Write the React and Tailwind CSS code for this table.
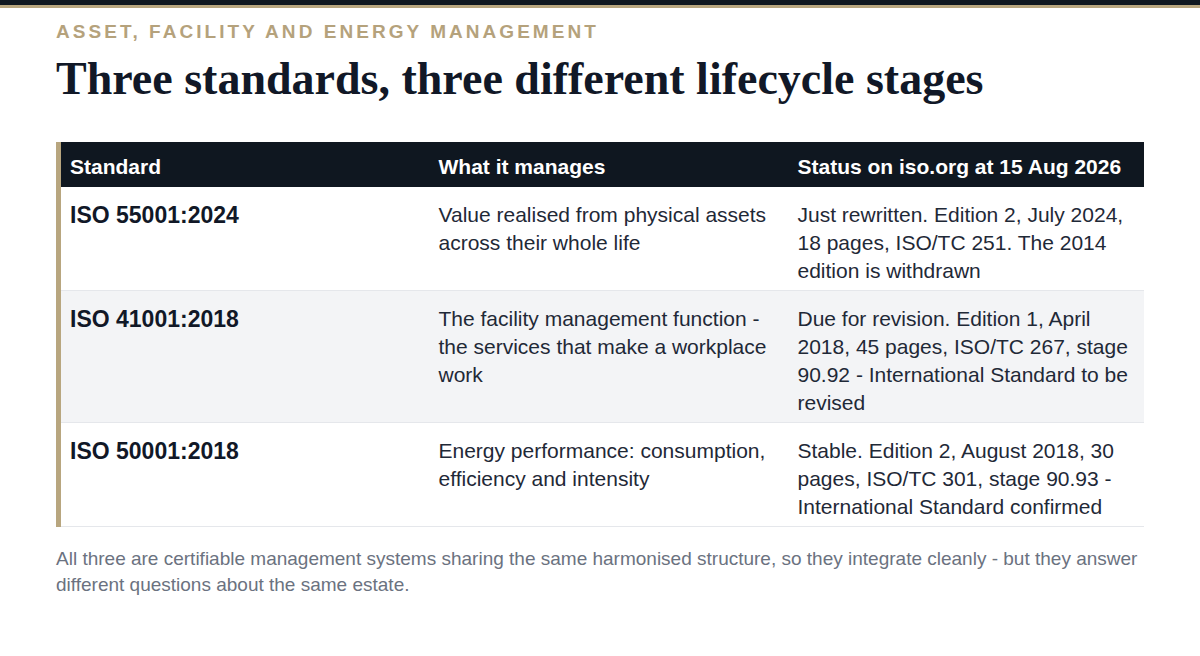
const rows = [
  {
    std: "ISO 55001:2024",
    what: "Value realised from physical assets across their whole life",
    status: "Just rewritten. Edition 2, July 2024, 18 pages, ISO/TC 251. The 2014 edition is withdrawn",
  },
  {
    std: "ISO 41001:2018",
    what: "The facility management function - the services that make a workplace work",
    status: "Due for revision. Edition 1, April 2018, 45 pages, ISO/TC 267, stage 90.92 - International Standard to be revised",
  },
  {
    std: "ISO 50001:2018",
    what: "Energy performance: consumption, efficiency and intensity",
    status: "Stable. Edition 2, August 2018, 30 pages, ISO/TC 301, stage 90.93 - International Standard confirmed",
  },
];

function App() {
  return (
    <div className="min-h-[656px] bg-white font-['Liberation_Sans',Arial,sans-serif]">
      <div className="h-[5px] bg-[#0f1720]" />
      <div className="h-[3px] bg-[#b8a67f]" />
      <div className="px-[56px] pt-[13px]">
        <div className="text-[19px] font-bold leading-[22px] tracking-[0.16em] text-[#b5a27c]">
          ASSET, FACILITY AND ENERGY MANAGEMENT
        </div>
        <h1 className="mt-[8px] font-['Liberation_Serif','Times_New_Roman',serif] text-[46px] font-bold leading-[56px] text-[#111827]">
          Three standards, three different lifecycle stages
        </h1>

        <table className="mt-[35px] w-full border-collapse border-l-[5px] border-[#b8a67f] text-left text-[21px] leading-[28px]">
          <thead>
            <tr className="bg-[#0f1720] text-white">
              <th className="w-[370px] px-[9px] pt-[11px] pb-[6px] font-bold">Standard</th>
              <th className="w-[359px] px-[10px] pt-[11px] pb-[6px] font-bold">What it manages</th>
              <th className="px-[10px] pt-[11px] pb-[6px] font-bold">Status on iso.org at 15 Aug 2026</th>
            </tr>
          </thead>
          <tbody>
            {rows.map((r, i) => (
              <tr
                key={r.std}
                className={`border-b border-[#e5e7eb] align-top ${i === 1 ? "bg-[#f3f4f6]" : "bg-white"}`}
              >
                <td className="px-[9px] pt-[14px] pb-[5px] text-[23px] font-bold text-[#111827]">{r.std}</td>
                <td className="px-[10px] pt-[14px] pb-[5px] text-[#1f2937]">{r.what}</td>
                <td className="px-[10px] pt-[14px] pb-[5px] text-[#1f2937]">{r.status}</td>
              </tr>
            ))}
          </tbody>
        </table>

        <p className="mt-[19px] text-[19px] leading-[26px] text-[#6b7280]">
          All three are certifiable management systems sharing the same harmonised structure, so they integrate cleanly - but they answer different questions about the same estate.
        </p>
      </div>
    </div>
  );
}

export default App;
